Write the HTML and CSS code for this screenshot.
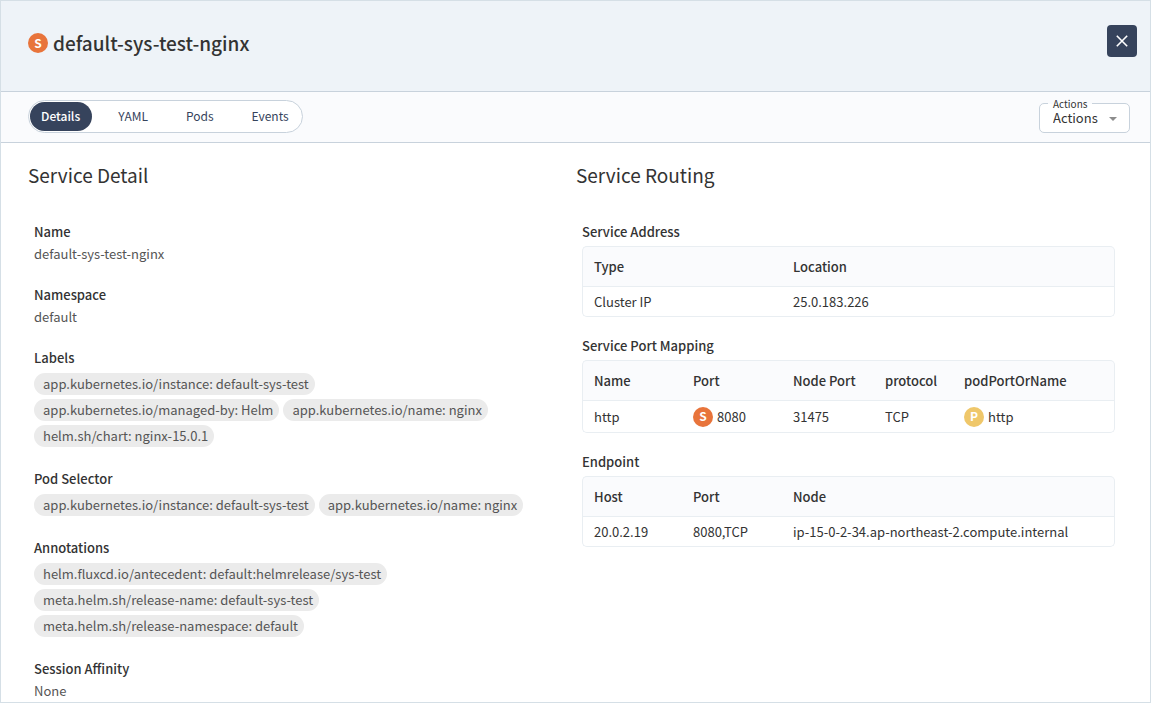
FILE: index.html
```html
<!DOCTYPE html>
<html lang="en">

<head>
    <meta charset="UTF-8">
    <meta name="viewport" content="width=device-width, initial-scale=1">
    <title>default-sys-test-nginx</title>
    <link rel="stylesheet" href="styles.css">
</head>

<body>
    <main class="panel">

        <header class="panel-header">
            <h1 class="panel-title"><span class="badge badge-service">S</span>default-sys-test-nginx</h1>
            <button class="close" type="button" aria-label="Close">
                <svg width="12" height="12" viewBox="0 0 12 12" fill="none" stroke="currentColor" stroke-width="1.6">
                    <path d="M0.8 0.8L11.2 11.2M11.2 0.8L0.8 11.2" />
                </svg>
            </button>
        </header>

        <div class="toolbar">
            <nav class="tabs">
                <button class="tab active" type="button">Details</button>
                <button class="tab" type="button">YAML</button>
                <button class="tab" type="button">Pods</button>
                <button class="tab" type="button">Events</button>
            </nav>
            <div class="actions">
                <label class="actions-label" for="actions">Actions</label>
                <select class="actions-select" id="actions">
                    <option>Actions</option>
                </select>
                <svg class="actions-arrow" width="8" height="4" viewBox="0 0 8 4">
                    <path d="M0 0H8L4 4Z" fill="currentColor" />
                </svg>
            </div>
        </div>

        <div class="content">
            <section class="column">
                <h2>Service Detail</h2>
                <dl class="fields">
                    <div>
                        <dt>Name</dt>
                        <dd>default-sys-test-nginx</dd>
                    </div>
                    <div>
                        <dt>Namespace</dt>
                        <dd>default</dd>
                    </div>
                    <div>
                        <dt>Labels</dt>
                        <dd class="chips">
                            <span class="chip">app.kubernetes.io/instance: default-sys-test</span>
                            <span class="chip">app.kubernetes.io/managed-by: Helm</span>
                            <span class="chip">app.kubernetes.io/name: nginx</span>
                            <span class="chip">helm.sh/chart: nginx-15.0.1</span>
                        </dd>
                    </div>
                    <div>
                        <dt>Pod Selector</dt>
                        <dd class="chips">
                            <span class="chip">app.kubernetes.io/instance: default-sys-test</span>
                            <span class="chip">app.kubernetes.io/name: nginx</span>
                        </dd>
                    </div>
                    <div>
                        <dt>Annotations</dt>
                        <dd class="chips">
                            <span class="chip">helm.fluxcd.io/antecedent: default:helmrelease/sys-test</span>
                            <span class="chip">meta.helm.sh/release-name: default-sys-test</span>
                            <span class="chip">meta.helm.sh/release-namespace: default</span>
                        </dd>
                    </div>
                    <div>
                        <dt>Session Affinity</dt>
                        <dd>None</dd>
                    </div>
                </dl>
            </section>

            <section class="column">
                <h2>Service Routing</h2>
                <div class="tables">
                    <table>
                        <caption>Service Address</caption>
                        <thead>
                            <tr>
                                <th class="col-wide">Type</th>
                                <th>Location</th>
                            </tr>
                        </thead>
                        <tbody>
                            <tr>
                                <td>Cluster IP</td>
                                <td>25.0.183.226</td>
                            </tr>
                        </tbody>
                    </table>

                    <table>
                        <caption>Service Port Mapping</caption>
                        <thead>
                            <tr>
                                <th class="col">Name</th>
                                <th class="col">Port</th>
                                <th class="col-port">Node Port</th>
                                <th class="col-protocol">protocol</th>
                                <th>podPortOrName</th>
                            </tr>
                        </thead>
                        <tbody>
                            <tr>
                                <td>http</td>
                                <td><span class="resource"><span class="badge badge-service">S</span>8080</span></td>
                                <td>31475</td>
                                <td>TCP</td>
                                <td><span class="resource"><span class="badge badge-pod">P</span>http</span></td>
                            </tr>
                        </tbody>
                    </table>

                    <table>
                        <caption>Endpoint</caption>
                        <thead>
                            <tr>
                                <th class="col">Host</th>
                                <th class="col">Port</th>
                                <th>Node</th>
                            </tr>
                        </thead>
                        <tbody>
                            <tr>
                                <td>20.0.2.19</td>
                                <td>8080,TCP</td>
                                <td>ip-15-0-2-34.ap-northeast-2.compute.internal</td>
                            </tr>
                        </tbody>
                    </table>
                </div>
            </section>
        </div>

    </main>
</body>

</html>
```
FILE: styles.css
```css
:root {
    --navy: #36435c;
    --text: #333333;
    --text-soft: #555555;
    --line: #c8d2dc;
    --line-soft: #e9eef2;
    --frame: #d5dfe6;
    --head: #eef3f8;
    --bar: #fafbfd;
    --chip: #ebebeb;
    --service: #e8743b;
    --pod: #efc76a;
}

* {
    margin: 0;
    padding: 0;
    box-sizing: border-box;
}

body {
    font-family: "Noto Sans CJK KR", "Noto Sans", sans-serif;
    font-size: 13px;
    line-height: 22px;
    color: var(--text);
    background-color: #ffffff;
}

button,
select {
    font: inherit;
    border: none;
    cursor: pointer;
}

/* Panel */
.panel {
    height: 100vh;
    overflow: hidden;
    border: 1px solid var(--frame);
}

.panel-header {
    display: flex;
    align-items: flex-start;
    justify-content: space-between;
    height: 91px;
    padding: 24px 13px 24px 27px;
    border-bottom: 1px solid var(--line);
    background-color: var(--head);
}

.panel-title {
    display: flex;
    align-items: center;
    gap: 5px;
    font-size: 19px;
    font-weight: 500;
    line-height: 36px;
}

.close {
    display: flex;
    align-items: center;
    justify-content: center;
    width: 30px;
    height: 32px;
    border-radius: 4px;
    color: #ffffff;
    background-color: var(--navy);
}

/* Kind badges */
.badge {
    display: flex;
    align-items: center;
    justify-content: center;
    width: 20px;
    height: 20px;
    border-radius: 50%;
    font-size: 12px;
    font-weight: 700;
    line-height: 18px;
    padding-bottom: 1px;
    color: #ffffff;
}

.badge-service {
    background-color: var(--service);
}

.badge-pod {
    background-color: var(--pod);
}

/* Toolbar */
.toolbar {
    display: flex;
    align-items: flex-start;
    justify-content: space-between;
    height: 51px;
    padding: 8px 20px 8px 27px;
    border-bottom: 1px solid var(--line);
    background-color: var(--bar);
}

.tabs {
    display: flex;
    gap: 15px;
    padding: 1px;
    border: 1px solid var(--line);
    border-radius: 17px;
    background-color: #ffffff;
}

.tab {
    height: 29px;
    padding: 0 12px 2px 11px;
    border-radius: 15px;
    font-size: 12px;
    color: var(--navy);
    background-color: transparent;
}

.tab.active {
    font-weight: 500;
    color: #ffffff;
    background-color: var(--navy);
}

.actions {
    position: relative;
    margin-top: 3px;
}

.actions-label {
    position: absolute;
    top: -6px;
    left: 9px;
    padding: 0 5px;
    font-size: 10px;
    line-height: 14px;
    background: linear-gradient(var(--bar) 50%, #ffffff 50%);
}

.actions-select {
    width: 91px;
    height: 30px;
    padding: 0 13px;
    border: 1px solid var(--line);
    border-radius: 5px;
    color: var(--text);
    background-color: #ffffff;
    appearance: none;
}

.actions-arrow {
    position: absolute;
    top: 14px;
    right: 13px;
    color: #8c8c8c;
    pointer-events: none;
}

/* Content */
.content {
    display: grid;
    grid-template-columns: 1fr 1fr;
    padding: 18px 26px 0 27px;
}

h2 {
    font-size: 19px;
    font-weight: 400;
    line-height: 28px;
}

.fields {
    display: flex;
    flex-direction: column;
    gap: 19px;
    padding: 32px 24px 0 6px;
}

dt {
    font-weight: 500;
}

dd {
    color: var(--text-soft);
}

.chips {
    display: flex;
    flex-wrap: wrap;
    gap: 4px;
    padding: 4px 0 2px;
}

.chip {
    padding: 0 6px 0 9px;
    border-radius: 11px;
    background-color: var(--chip);
}

/* Tables */
.tables {
    display: flex;
    flex-direction: column;
    gap: 18px;
    padding: 32px 9px 0 6px;
}

table {
    width: 100%;
    border-spacing: 0;
    table-layout: fixed;
}

caption {
    padding-bottom: 3px;
    font-weight: 500;
    text-align: left;
}

th,
td {
    padding: 0 11px;
    text-align: left;
    border-bottom: 1px solid var(--line-soft);
}

th {
    height: 41px;
    font-weight: 500;
    border-top: 1px solid var(--line-soft);
    background-color: var(--bar);
}

td {
    height: 30px;
}

th:first-child,
td:first-child {
    border-left: 1px solid var(--line-soft);
}

th:last-child,
td:last-child {
    border-right: 1px solid var(--line-soft);
}

th:first-child {
    border-top-left-radius: 5px;
}

th:last-child {
    border-top-right-radius: 5px;
}

td:first-child {
    border-bottom-left-radius: 5px;
}

td:last-child {
    border-bottom-right-radius: 5px;
}

.col {
    width: 100px;
}

.col-wide {
    width: 200px;
}

.col-port {
    width: 92px;
}

.col-protocol {
    width: 79px;
}

.resource {
    display: flex;
    align-items: center;
    gap: 4px;
    height: 31px;
}
```
